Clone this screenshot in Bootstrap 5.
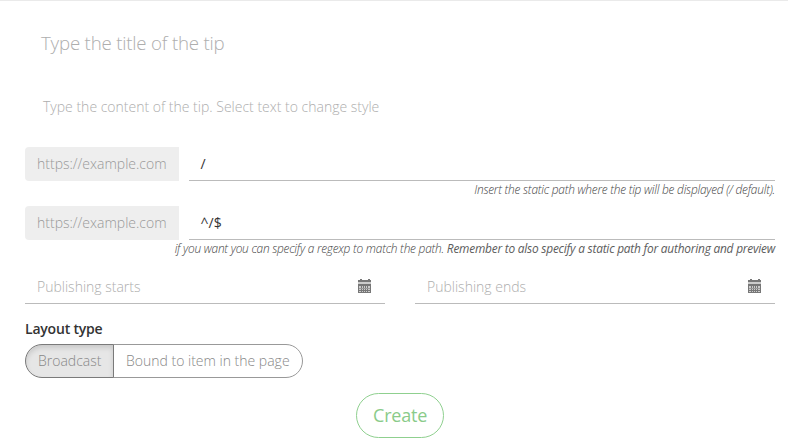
<!DOCTYPE html>
<html lang="en">
<head>
<meta charset="utf-8">
<meta name="viewport" content="width=device-width, initial-scale=1">
<title>New tip</title>
<link href="https://cdn.jsdelivr.net/npm/bootstrap@5.3.0/dist/css/bootstrap.min.css" rel="stylesheet">
<style>
body{font-family:"Open Sans",sans-serif;font-size:14px;line-height:20px;font-weight:300;color:#333;background:#fff;overflow:hidden}
.tip-form{border-top:1px solid #eaeaea;padding:0 13px 0 25px;height:448px}
.tip-title{font-size:18.7px;letter-spacing:-.2px;line-height:26px;color:#aeaeae;padding:29px 16px 0;height:91px}
.tip-content{color:#aeaeae;padding:5px 18px 0;height:55px}
.path-row{height:34px;gap:10px}
.path-host{width:154px;height:34px;padding:7px 12px;background:#eee;color:#999;border:0;border-radius:4px 0 0 4px;font-size:14px;line-height:20px;font-weight:300}
.line-field{height:34px;padding:7px 12px 6px;border:0;border-bottom:1px solid #bbb;border-radius:0;background:transparent;font-size:14px;line-height:20px;color:#333;font-weight:400}
.hint{font-size:11.9px;letter-spacing:-.24px;line-height:16px;height:25px;font-style:italic;color:#444;white-space:nowrap}
.hint strong{font-weight:500;letter-spacing:-.22px;color:#5c5c5c}
.date-row{gap:30px;margin-top:5px}
.date-row .line-field{color:#aeaeae;font-weight:300;padding-right:13px}
.date-row svg{margin-top:-2px}
.layout-label{font-weight:600;letter-spacing:-.2px;margin:15px 0 5px;line-height:20px}
.layout-toggle .btn{--bs-btn-color:#888;--bs-btn-border-color:#999;--bs-btn-border-radius:17px;--bs-btn-font-size:14px;--bs-btn-font-weight:300;--bs-btn-line-height:20px;--bs-btn-padding-y:6px;--bs-btn-padding-x:12px;--bs-btn-active-color:#888;--bs-btn-active-bg:#e6e6e6;--bs-btn-active-border-color:#7a7a7a}
.layout-toggle .btn.active{box-shadow:inset 0 3px 5px rgba(0,0,0,.125)}
.layout-toggle .btn+.btn{padding-left:11.5px}
.create-row{margin-top:15px}
.btn-create{--bs-btn-color:#8acb8a;--bs-btn-border-color:#8fd08f;--bs-btn-font-size:18px;--bs-btn-font-weight:400;--bs-btn-line-height:23px;--bs-btn-padding-y:9px;--bs-btn-padding-x:16px;--bs-btn-border-radius:23px;height:45px;width:88px;letter-spacing:-.2px}
</style>
</head>
<body>
<form class="tip-form">
  <div class="tip-title">Type the title of the tip</div>
  <div class="tip-content">Type the content of the tip. Select text to change style</div>

  <div class="path-row d-flex">
    <span class="path-host input-group-text">https://example.com</span>
    <div class="form-control line-field">/</div>
  </div>
  <div class="hint text-end">Insert the static path where the tip will be displayed (/ default).</div>

  <div class="path-row d-flex">
    <span class="path-host input-group-text">https://example.com</span>
    <div class="form-control line-field">^/$</div>
  </div>
  <div class="hint text-end">if you want you can specify a regexp to match the path. <strong>Remember to also specify a static path for authoring and preview</strong></div>

  <div class="date-row d-flex">
    <div class="form-control line-field d-flex justify-content-between align-items-center">
      <span>Publishing starts</span>
      <svg width="14" height="14" viewBox="0 0 14 14" shape-rendering="crispEdges"><path fill="#777" d="M2 0h2v1h6V0h2v1h1v3H0V1h2z"/><path fill="#ccc" d="M0 3h13v2H0z"/><path fill="#777" d="M0 5h13v9H0z"/><path fill="#ccc" d="M1 7h2v1H1zM4 7h1v1H4zM6 7h1v1H6zM8 7h1v1H8zM10 7h2v1h-2zM1 8h2v3H1zM4 8h1v3H4zM6 8h1v3H6zM8 8h1v3H8zM10 8h2v3h-2zM1 12h2v1H1zM4 12h1v1H4zM6 12h1v1H6zM8 12h1v1H8zM10 12h2v1h-2z"/><path fill="#999" d="M1 9h11v1H1z"/></svg>
    </div>
    <div class="form-control line-field d-flex justify-content-between align-items-center">
      <span>Publishing ends</span>
      <svg width="14" height="14" viewBox="0 0 14 14" shape-rendering="crispEdges"><path fill="#777" d="M2 0h2v1h6V0h2v1h1v3H0V1h2z"/><path fill="#ccc" d="M0 3h13v2H0z"/><path fill="#777" d="M0 5h13v9H0z"/><path fill="#ccc" d="M1 7h2v1H1zM4 7h1v1H4zM6 7h1v1H6zM8 7h1v1H8zM10 7h2v1h-2zM1 8h2v3H1zM4 8h1v3H4zM6 8h1v3H6zM8 8h1v3H8zM10 8h2v3h-2zM1 12h2v1H1zM4 12h1v1H4zM6 12h1v1H6zM8 12h1v1H8zM10 12h2v1h-2z"/><path fill="#999" d="M1 9h11v1H1z"/></svg>
    </div>
  </div>

  <div class="layout-label">Layout type</div>
  <div class="layout-toggle btn-group d-flex" role="group">
    <button type="button" class="btn active flex-grow-0">Broadcast</button>
    <button type="button" class="btn flex-grow-0 text-nowrap">Bound to item in the page</button>
  </div>
  <div class="create-row text-center">
    <button type="button" class="btn btn-create">Create</button>
  </div>
</form>
<script src="https://cdn.jsdelivr.net/npm/bootstrap@5.3.0/dist/js/bootstrap.bundle.min.js"></script>
</body>
</html>
